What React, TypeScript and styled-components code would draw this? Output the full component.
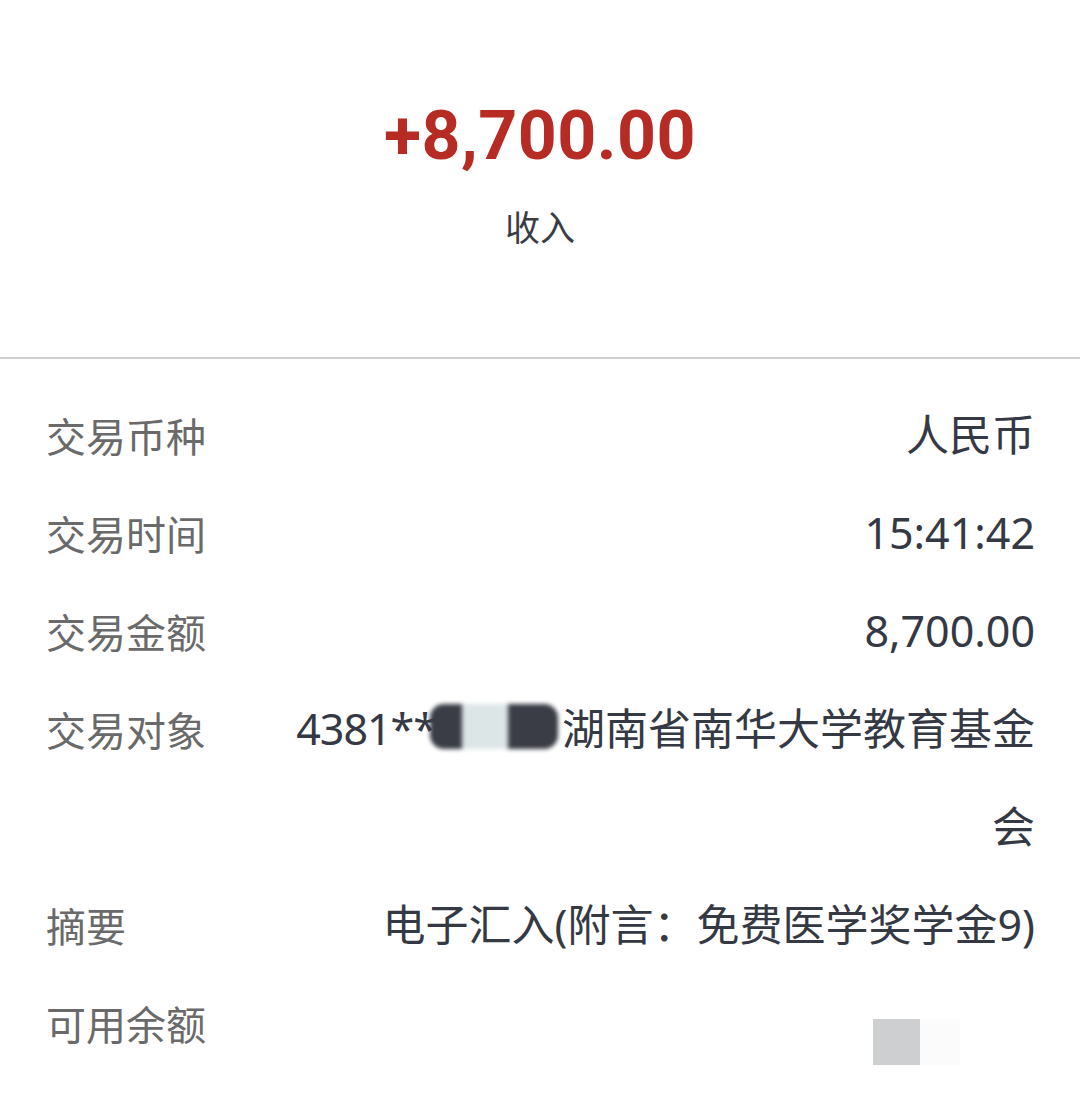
import React from "react";
import styled, { createGlobalStyle } from "styled-components";

const Global = createGlobalStyle`
  html, body { margin: 0; padding: 0; background: #fff; }
  body { font-family: "Noto Sans CJK SC", "Noto Sans", sans-serif; }
`;

const Page = styled.div`
  width: 1080px;
  min-height: 1103px;
  background: #ffffff;
  display: flex;
  flex-direction: column;
`;

const Header = styled.header`
  height: 357px;
  display: flex;
  flex-direction: column;
  align-items: center;
  padding-top: 96px;
  box-sizing: border-box;
`;

const Amount = styled.div`
  font-family: Roboto, "Noto Sans", sans-serif;
  font-weight: 700;
  font-size: 68px;
  line-height: 80px;
  color: #b72b25;
  letter-spacing: 0.5px;
`;

const Kind = styled.div`
  margin-top: 26px;
  font-size: 35px;
  line-height: 48px;
  color: #3a3d44;
`;

const Divider = styled.hr`
  margin: 0;
  border: none;
  height: 2px;
  background: #cfcfcf;
`;

const List = styled.div`
  display: flex;
  flex-direction: column;
  padding: 27px 45px 0 46px;
`;

const Row = styled.div`
  display: grid;
  grid-template-columns: 250px 1fr;
  align-items: start;
`;

const Label = styled.div`
  font-size: 40px;
  line-height: 98px;
  color: #6a6a6a;
  white-space: nowrap;
`;

const Value = styled.div`
  font-family: "Noto Sans", "Noto Sans CJK SC", sans-serif;
  font-size: 43px;
  line-height: 98px;
  color: #343944;
  text-align: right;
  word-break: break-all;
`;

const Account = styled.span`
  letter-spacing: -1px;
`;

const Blur = styled.span`
  display: inline-block;
  vertical-align: -4px;
  width: 128px;
  height: 45px;
  margin-left: -6px;
  margin-right: 4px;
  border-radius: 14px;
  background: linear-gradient(
    90deg,
    #3a3d46 0%,
    #3a3d46 24%,
    #dde6e7 26%,
    #dde6e7 60%,
    #3a3d46 62%,
    #3a3d46 100%
  );
  filter: blur(2px);
`;

const Masked = styled.span`
  display: inline-flex;
`;

const Square = styled.span<{ $tone: string; $w: number }>`
  display: inline-block;
  width: ${(p) => p.$w}px;
  height: 46px;
  background: ${(p) => p.$tone};
`;

const BalanceValue = styled.div`
  display: flex;
  justify-content: flex-end;
  align-items: flex-start;
  height: 98px;
  padding-right: 75px;
  padding-top: 45px;
  box-sizing: border-box;
`;

export default function App() {
  return (
    <Page>
      <Global />
      <Header>
        <Amount>+8,700.00</Amount>
        <Kind>收入</Kind>
      </Header>
      <Divider />
      <List>
        <Row>
          <Label>交易币种</Label>
          <Value>人民币</Value>
        </Row>
        <Row>
          <Label>交易时间</Label>
          <Value>15:41:42</Value>
        </Row>
        <Row>
          <Label>交易金额</Label>
          <Value>8,700.00</Value>
        </Row>
        <Row>
          <Label>交易对象</Label>
          <Value>
            <Account>4381**</Account>
            <Blur />
            湖南省南华大学教育基金会
          </Value>
        </Row>
        <Row>
          <Label>摘要</Label>
          <Value>电子汇入(附言：免费医学奖学金9)</Value>
        </Row>
        <Row>
          <Label>可用余额</Label>
          <BalanceValue>
            <Masked>
              <Square $tone="#cdcfd1" $w={47} />
              <Square $tone="#fbfbfb" $w={40} />
            </Masked>
          </BalanceValue>
        </Row>
      </List>
    </Page>
  );
}
